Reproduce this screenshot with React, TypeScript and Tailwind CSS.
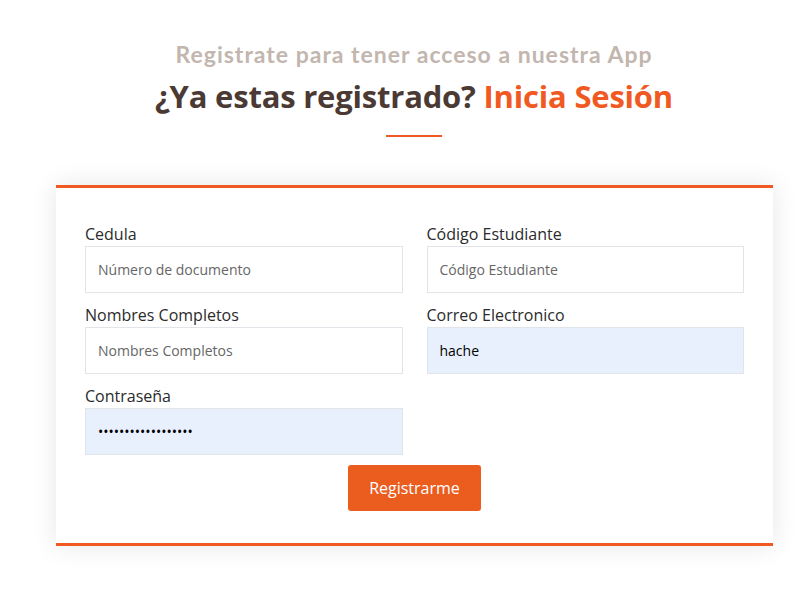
import React from 'react'

const fields = [
  { label: 'Cedula', placeholder: 'Número de documento', value: '', type: 'text' },
  { label: 'Código Estudiante', placeholder: 'Código Estudiante', value: '', type: 'text' },
  { label: 'Nombres Completos', placeholder: 'Nombres Completos', value: '', type: 'text' },
  { label: 'Correo Electronico', placeholder: 'Correo Electronico', value: 'hache', type: 'email' },
  { label: 'Contraseña', placeholder: 'Contraseña', value: 'abcdefghijklmnopqr', type: 'password' },
]

export default function App() {
  return (
    <div
      className="min-h-[600px] w-[800px] bg-white"
      style={{ fontFamily: '"Open Sans", "Noto Sans", sans-serif' }}
    >
      {/* Heading */}
      <div className="flex flex-col items-center pt-[39px] pl-[28px]">
        <h2
          className="text-[23px] leading-[30px] font-bold text-[#c2b6ae] tracking-[1px]"
          style={{ fontFamily: 'Lato, "Open Sans", sans-serif' }}
        >
          Registrate para tener acceso a nuestra App
        </h2>
        <h1 className="mt-[7px] text-[31px] leading-[40px] font-bold text-[#4a3a33] tracking-[-0.2px]">
          ¿Ya estas registrado? <span className="text-[#f05a22]">Inicia Sesión</span>
        </h1>
        <div className="mt-[19px] h-[2px] w-[56px] bg-[#f05a22]" />
      </div>

      {/* Card */}
      <div className="ml-[56px] mt-[48px] w-[717px] bg-white border-t-[3px] border-b-[3px] border-[#f05a22] shadow-[0_0_24px_rgba(0,0,0,0.10)] px-[29px] pt-[34px] pb-[32px]">
        <div className="grid grid-cols-2 gap-x-[24px] gap-y-[10px]">
          {fields.map((f) => (
            <div key={f.label} className="flex flex-col">
              <label className="text-[16px] leading-[24px] text-[#2b2b2b]">{f.label}</label>
              <input
                type={f.type}
                defaultValue={f.value}
                placeholder={f.placeholder}
                className={
                  'h-[47px] w-full border border-[#e1e4e8] px-[12px] text-[14px] text-black placeholder:text-[#666] outline-none ' +
                  (f.value ? 'bg-[#e8f0fe] border-[#dfe3ea]' : 'bg-white')
                }
              />
            </div>
          ))}
        </div>
        <div className="mt-[10px] flex justify-center">
          <button className="h-[46px] w-[133px] rounded-[3px] bg-[#eb5c1f] text-[16px] text-white">
            Registrarme
          </button>
        </div>
      </div>
    </div>
  )
}
